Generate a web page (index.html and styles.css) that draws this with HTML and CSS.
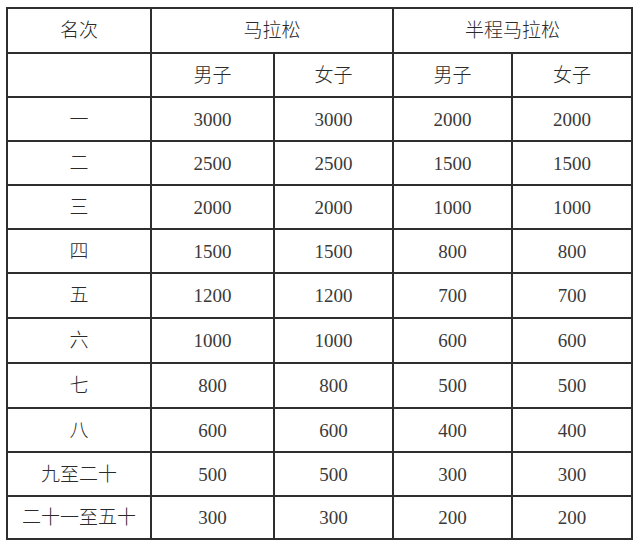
FILE: index.html
```html
<!DOCTYPE html>
<html lang="zh">
<head>
<meta charset="utf-8">
<link rel="stylesheet" href="styles.css">
</head>
<body>
<div class="table">
  <div class="cell r1">名次</div>
  <div class="cell r1 span2">马拉松</div>
  <div class="cell r1 span2">半程马拉松</div>

  <div class="cell"></div>
  <div class="cell">男子</div>
  <div class="cell">女子</div>
  <div class="cell">男子</div>
  <div class="cell">女子</div>

  <div class="cell">一</div><div class="cell num">3000</div><div class="cell num">3000</div><div class="cell num">2000</div><div class="cell num">2000</div>
  <div class="cell">二</div><div class="cell num">2500</div><div class="cell num">2500</div><div class="cell num">1500</div><div class="cell num">1500</div>
  <div class="cell">三</div><div class="cell num">2000</div><div class="cell num">2000</div><div class="cell num">1000</div><div class="cell num">1000</div>
  <div class="cell">四</div><div class="cell num">1500</div><div class="cell num">1500</div><div class="cell num">800</div><div class="cell num">800</div>
  <div class="cell">五</div><div class="cell num">1200</div><div class="cell num">1200</div><div class="cell num">700</div><div class="cell num">700</div>
  <div class="cell">六</div><div class="cell num">1000</div><div class="cell num">1000</div><div class="cell num">600</div><div class="cell num">600</div>
  <div class="cell">七</div><div class="cell num">800</div><div class="cell num">800</div><div class="cell num">500</div><div class="cell num">500</div>
  <div class="cell">八</div><div class="cell num">600</div><div class="cell num">600</div><div class="cell num">400</div><div class="cell num">400</div>
  <div class="cell">九至二十</div><div class="cell num">500</div><div class="cell num">500</div><div class="cell num">300</div><div class="cell num">300</div>
  <div class="cell">二十一至五十</div><div class="cell num">300</div><div class="cell num">300</div><div class="cell num">200</div><div class="cell num">200</div>
</div>
</body>
</html>
```

FILE: styles.css
```css
html, body {
  margin: 0;
  padding: 0;
  background: #fff;
}

body {
  padding: 7px 0 0 6px;
}

.table {
  display: grid;
  width: 627px;
  box-sizing: border-box;
  grid-template-columns: 144px 123px 119px 119px 120px;
  grid-template-rows: 45px 44px 44px 44px 44px 44px 45px 45px 45px 44px 44px 43px;
  border-left: 2px solid #2e2e2e;
  border-top: 2px solid #2e2e2e;
  font-family: "Liberation Serif", "Noto Sans CJK SC", serif;
  font-size: 19px;
  color: #2a2a2a;
}

.cell {
  box-sizing: border-box;
  border-right: 2px solid #2e2e2e;
  border-bottom: 2px solid #2e2e2e;
  display: flex;
  align-items: center;
  justify-content: center;
  font-weight: 300;
  line-height: 1;
}

.span2 {
  grid-column: span 2;
}

.num {
  color: #3a3a3a;
}
```
